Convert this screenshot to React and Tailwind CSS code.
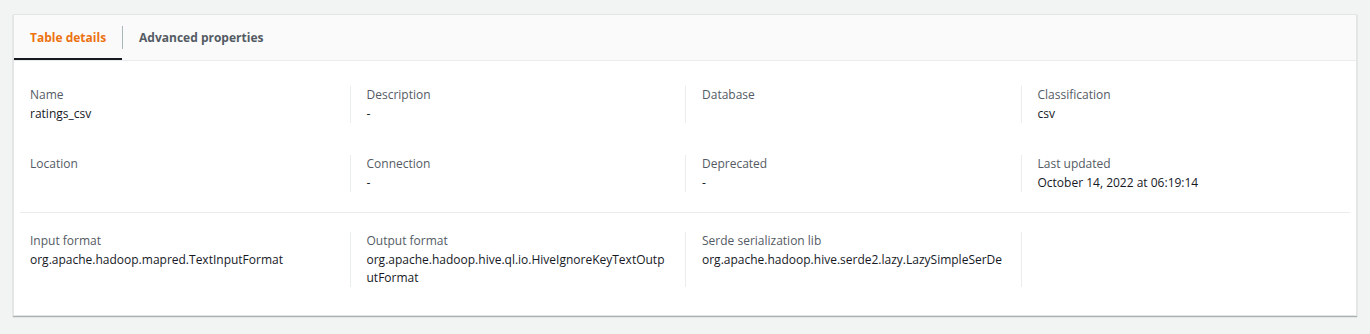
import React from "react";

const rows = [
  [
    { label: "Name", value: "ratings_csv" },
    { label: "Description", value: "-" },
    { label: "Database", value: "" },
    { label: "Classification", value: "csv" },
  ],
  [
    { label: "Location", value: "" },
    { label: "Connection", value: "-" },
    { label: "Deprecated", value: "-" },
    { label: "Last updated", value: "October 14, 2022 at 06:19:14" },
  ],
];

const formats = [
  { label: "Input format", value: "org.apache.hadoop.mapred.TextInputFormat" },
  { label: "Output format", value: "org.apache.hadoop.hive.ql.io.HiveIgnoreKeyTextOutputFormat" },
  { label: "Serde serialization lib", value: "org.apache.hadoop.hive.serde2.lazy.LazySimpleSerDe" },
  null,
];

function Field({ item, first }) {
  return (
    <div className={`flex flex-col pr-4 ${first ? "pl-4" : "pl-4 border-l border-[#eaeded]"}`}>
      {item && (
        <>
          <p className="text-[#545b64] leading-[18px]">{item.label}</p>
          <p className="text-[#16191f] leading-[18px] break-all min-h-[18px] mt-[1px]">{item.value}</p>
        </>
      )}
    </div>
  );
}

export default function App() {
  return (
    <div className="min-h-[334px] bg-[#f2f3f3] pt-[14px] px-[13px] text-[12px]" style={{ fontFamily: '"Open Sans", "Liberation Sans", sans-serif' }}>
      <div className="bg-white border border-[#e3e5e5] shadow-[0_1px_1px_0_rgba(0,28,36,0.3)]">
        <div className="flex items-stretch bg-[#fafafa] border-b border-[#eaeded] h-[46px]">
          <div className="relative flex items-center px-4 font-bold text-[#ec7211]">
            Table details
            <span className="absolute left-0 right-0 bottom-0 h-[2px] bg-[#16191f]"></span>
          </div>
          <div className="w-px bg-[#aab7b8] my-[11px]"></div>
          <div className="flex items-center px-4 font-bold text-[#545b64]">Advanced properties</div>
        </div>
        <div className="pt-[25px]">
          <div className="grid grid-cols-4 gap-y-[32px]">
            {rows.map((row, i) =>
              row.map((item, j) => <Field key={`${i}-${j}`} item={item} first={j === 0} />)
            )}
          </div>
          <div className="mx-[6px] mt-[20px] border-t border-[#eaeded]"></div>
          <div className="grid grid-cols-4 pt-[19px] pb-[28px]">
            {formats.map((item, j) => (
              <Field key={j} item={item} first={j === 0} />
            ))}
          </div>
        </div>
      </div>
    </div>
  );
}
